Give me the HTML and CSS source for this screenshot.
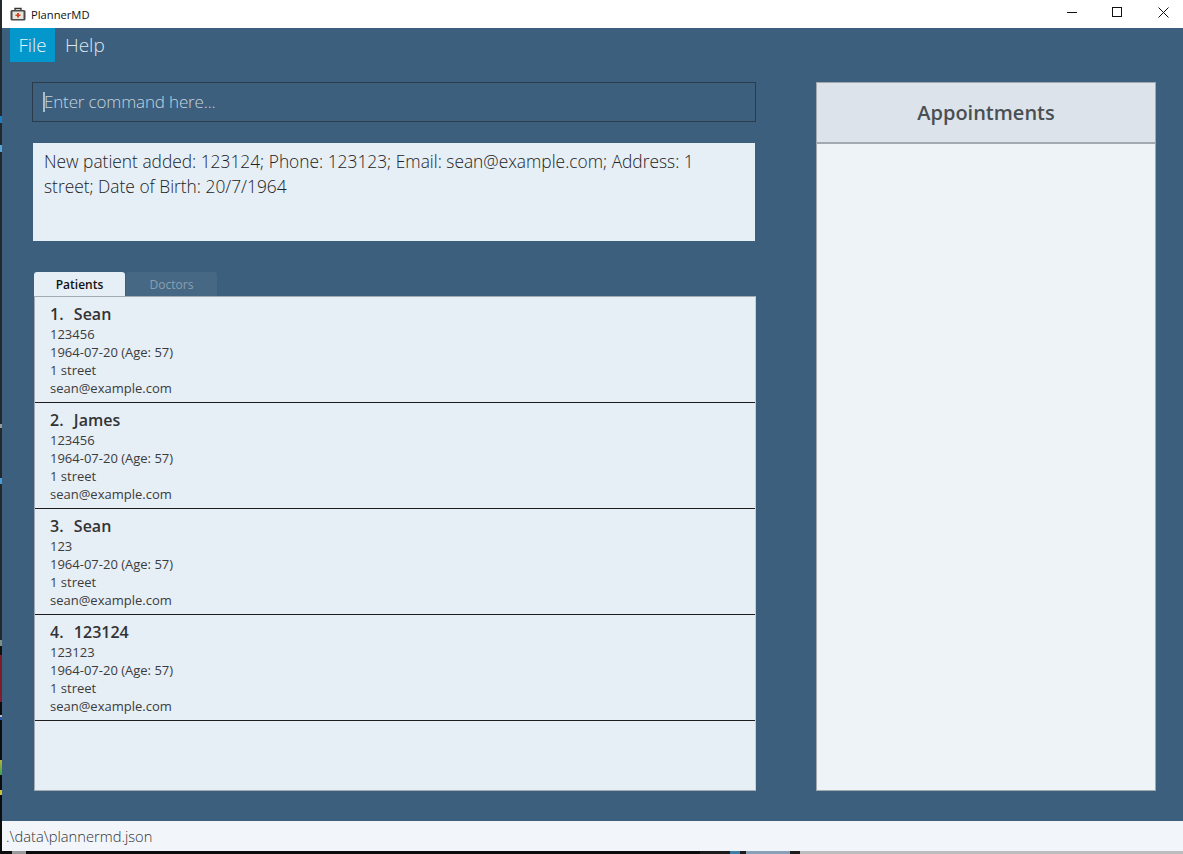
FILE: index.html
```html
<!DOCTYPE html>
<html lang="en">
<head>
<meta charset="utf-8">
<title>PlannerMD</title>
<link rel="stylesheet" href="styles.css">
</head>
<body>
<div class="window">
  <header class="titlebar">
    <svg class="app-icon" width="16" height="14" viewBox="0 0 16 14">
      <path d="M5 3V1.500h6V3" fill="none" stroke="#333" stroke-width="1.400"/>
      <rect x="0.500" y="3" width="15" height="10.500" rx="1.500" fill="#4a4a4a"/>
      <rect x="2.500" y="4.500" width="11" height="7.500" fill="#e9e4de"/>
      <path d="M7 6h2v1.500h1.500v1.600H9v1.400H7V9.100H5.500V7.500H7z" fill="#d2481f"/>
    </svg>
    <span class="app-name">PlannerMD</span>
    <div class="win-controls">
      <svg width="11" height="11" viewBox="0 0 11 11"><path d="M0 5.500h10" stroke="#111" fill="none"/></svg>
      <svg width="12" height="11" viewBox="0 0 12 11"><rect x="0.500" y="0.500" width="9" height="9" stroke="#111" fill="none"/></svg>
      <svg width="11" height="11" viewBox="0 0 11 11"><path d="M0.500 0.500l10 10M10.500 0.500l-10 10" stroke="#111" fill="none"/></svg>
    </div>
  </header>
  <nav class="menubar">
    <span class="menu-item active">File</span>
    <span class="menu-item">Help</span>
  </nav>
  <main class="content">
    <section class="left">
      <div class="command"><span class="caret"></span><span class="placeholder">Enter command here...</span></div>
      <div class="result">New patient added: 123124; Phone: 123123; Email: sean@example.com; Address: 1 street; Date of Birth: 20/7/1964</div>
      <div class="tabs">
        <span class="tab selected">Patients</span>
        <span class="tab">Doctors</span>
      </div>
      <div class="list">
        <article class="card">
          <h3>1.&nbsp; Sean</h3>
          <p>123456</p><p>1964-07-20 (Age: 57)</p><p>1 street</p><p>sean@example.com</p>
        </article>
        <article class="card">
          <h3>2.&nbsp; James</h3>
          <p>123456</p><p>1964-07-20 (Age: 57)</p><p>1 street</p><p>sean@example.com</p>
        </article>
        <article class="card">
          <h3>3.&nbsp; Sean</h3>
          <p>123</p><p>1964-07-20 (Age: 57)</p><p>1 street</p><p>sean@example.com</p>
        </article>
        <article class="card">
          <h3>4.&nbsp; 123124</h3>
          <p>123123</p><p>1964-07-20 (Age: 57)</p><p>1 street</p><p>sean@example.com</p>
        </article>
      </div>
    </section>
    <aside class="right">
      <h2 class="right-head">Appointments</h2>
      <div class="right-body"></div>
    </aside>
  </main>
  <footer class="status">.\data\plannermd.json</footer>
</div>
<div class="taskbar"></div>
</body>
</html>
```
FILE: styles.css
```css
* { box-sizing: border-box; }
html, body { margin: 0; height: 100%; }
body {
  width: 1183px;
  height: 854px;
  overflow: hidden;
  background: linear-gradient(to bottom,
    #23282c 0, #23282c 116px, #1a7fc4 116px, #1a7fc4 123px, #23282c 123px,
    #23282c 145px, #5aa5d8 145px, #5aa5d8 152px, #23282c 152px,
    #23282c 424px, #9a9a9a 424px, #9a9a9a 428px, #23282c 428px,
    #23282c 478px, #4a9bd6 478px, #4a9bd6 484px, #23282c 484px,
    #23282c 640px, #7c9088 640px, #7c9088 646px, #111 646px,
    #111 655px, #7d1c2c 655px, #7d1c2c 702px, #0c0c0c 702px,
    #0c0c0c 715px, #bbb 715px, #bbb 717px, #2a56b0 717px, #2a56b0 720px, #0c0c0c 720px,
    #0c0c0c 760px, #b8b23a 760px, #3aa050 775px, #0c0c0c 775px,
    #0c0c0c 790px, #c8c030 790px, #c8c030 795px, #0c0c0c 795px, #0c0c0c 854px);
  font-family: "Open Sans", sans-serif;
  display: flex;
  flex-direction: column;
  padding-left: 2px;
}
.window {
  height: 851px;
  display: flex;
  flex-direction: column;
  background: #3c5f7d;
}
.titlebar {
  height: 28px;
  background: #fff;
  display: flex;
  align-items: center;
  padding-left: 8px;
  flex: none;
}
.app-icon { flex: none; }
.app-name {
  margin-left: 5px;
  font-size: 11.200px;
  color: #111;
}
.win-controls {
  margin-left: auto;
  display: flex;
  gap: 34px;
  padding-right: 14px;
  padding-bottom: 3px;
}
.menubar {
  height: 34px;
  display: flex;
  padding-left: 8px;
  flex: none;
}
.menu-item {
  width: 45px;
  text-align: center;
  font-size: 18.600px;
  font-weight: 300;
  line-height: 34px;
  color: #dfe6ec;
}
.menu-item.active { background: #0397cb; color: #e8f4fa; }
.menu-item + .menu-item { width: 50px; text-align: left; padding-left: 10px; font-size: 19px; }
.content {
  flex: 1;
  display: flex;
  padding: 20px 27px 30px 30px;
  justify-content: space-between;
  min-height: 0;
}
.left {
  width: 724px;
  display: flex;
  flex-direction: column;
}
.command {
  height: 40px;
  border: 1px solid #2b3b49;
  display: flex;
  align-items: center;
  padding-left: 10px;
  padding-bottom: 1px;
  flex: none;
}
.caret { width: 2px; height: 20px; background: #a9bccb; flex: none; }
.placeholder {
  font-size: 17px;
  font-weight: 300;
  color: #c6d3de;
  letter-spacing: -0.15px;
  margin-left: -1px;
  line-height: 20px;
}
.result {
  margin: 21px 1px 0;
  height: 98px;
  flex: none;
  background: #e6eef6;
  padding: 6px 11px;
  font-size: 17.350px;
  font-weight: 300;
  line-height: 25px;
  color: #222;
}
.tabs {
  margin: 31px 0 0 2px;
  height: 24px;
  display: flex;
  gap: 1px;
  flex: none;
}
.tab {
  width: 91px;
  background: #466885;
  border-radius: 3px 3px 0 0;
  text-align: center;
  font-size: 12px;
  line-height: 25px;
  color: #8a9fb1;
}
.tab.selected { background: #e6eef6; color: #111; font-weight: 600; }
.list {
  flex: 1;
  margin-left: 2px;
  background: #e6eef6;
  border: 1px solid #a3aab0;
  border-right-color: #c9ced2;
  min-height: 0;
}
.card {
  height: 106px;
  border-bottom: 1px solid #1d1d1d;
  padding: 6px 15px 0;
}
.card h3 {
  margin: 0;
  font-size: 16px;
  font-weight: 600;
  line-height: 22px;
  color: #333;
  word-spacing: 1px;
}
.card p {
  margin: 0;
  font-size: 13px;
  line-height: 18px;
  color: #3c3c3c;
}
.right {
  width: 340px;
  display: flex;
  flex-direction: column;
  border: 1px solid #a3a8ad;
  background: #eef3f8;
}
.right-head {
  margin: 0;
  height: 61px;
  flex: none;
  background: #dce3eb;
  border-bottom: 2px solid #a3a9ae;
  text-align: center;
  font-size: 20px;
  font-weight: 600;
  line-height: 60px;
  color: #4a4f54;
}
.right-body { flex: 1; }
.status {
  height: 30px;
  flex: none;
  background: #f2f6fb;
  padding-left: 4px;
  font-size: 14.700px;
  font-weight: 300;
  line-height: 31px;
  color: #333;
}
.taskbar {
  height: 3px;
  flex: none;
  margin-left: -2px;
  background: linear-gradient(to right,
    #0c0c0c 0, #0c0c0c 12px, #999 12px, #999 26px, #0c0c0c 26px,
    #0c0c0c 700px, #1c1c1c 700px, #1c1c1c 730px, #3c7ea8 730px, #3c7ea8 740px, #1c1c1c 740px,
    #1c1c1c 746px, #8aa0b8 746px, #8aa0b8 790px, #1c1c1c 790px, #1c1c1c 800px, #bdbdbd 800px);
}
```
